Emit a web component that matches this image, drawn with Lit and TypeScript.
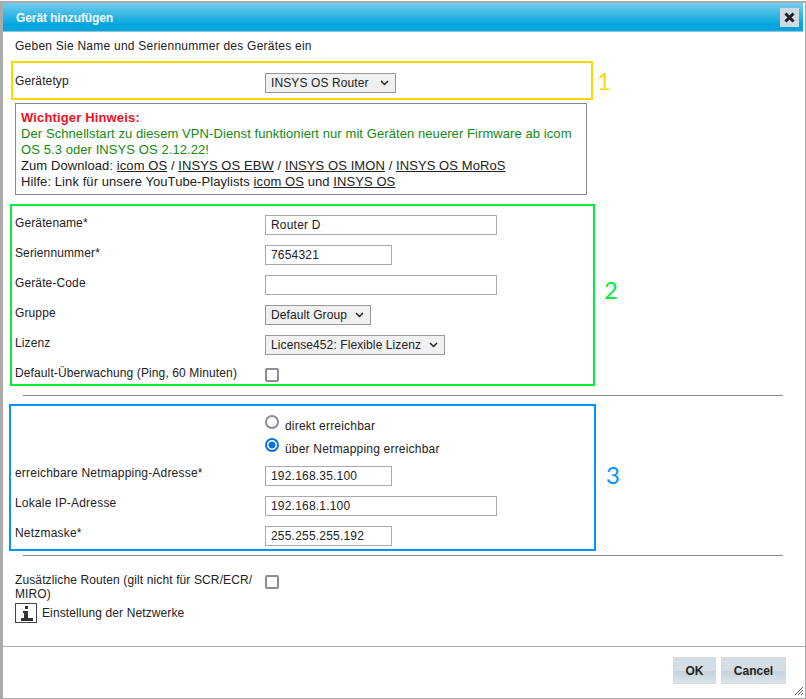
import { LitElement, html, css } from "lit";
import { customElement } from "lit/decorators.js";

const arrow = "url(\"data:image/svg+xml,%3Csvg xmlns='http://www.w3.org/2000/svg' width='9' height='6'%3E%3Cpath d='M1 1l3.5 3.5L8 1' fill='none' stroke='%23222' stroke-width='1.5'/%3E%3C/svg%3E\")";

@customElement("app-root")
export class AppRoot extends LitElement {
  static styles = css`
    :host { display: block; width: 806px; height: 699px; background: #fff; font-family: "Liberation Sans", Arial, sans-serif; font-size: 12px; color: #222; overflow: hidden; }
    * { box-sizing: border-box; }
    .dialog { height: 698px; margin-top: 1px; border: 2px solid #aaa; border-width: 2px 1px 1px 3px; padding-right: 2px; display: flex; flex-direction: column; position: relative; background: #fff; }
    .head { height: 29px; flex: none; display: flex; align-items: center; justify-content: space-between; padding: 0 4px 0 13px; background: linear-gradient(#72cdee, #00a5dc 80%); border-bottom: 1px solid #8fc4dc; color: #f4fbfe; font-weight: bold; font-size: 12px; letter-spacing: -0.1px; }
    .head span { margin-top: 2px; }
    .close { width: 19px; height: 19px; background: #d0d9e0; display: flex; align-items: center; justify-content: center; margin-top: 1px; }
    .body { flex: 1; display: flex; flex-direction: column; }
    .intro { margin: 7px 0 0 12px; height: 15px; line-height: 15px; letter-spacing: 0.24px; }
    .sec { display: flex; align-items: center; }
    .frame { border: 2px solid; flex: none; }
    .y { border-color: #ffd800; margin: 7px 0 0 8px; width: 582px; height: 39px; padding: 10px 0 0 2px; }
    .g { border-color: #00ee3a; margin: 9px 0 0 7px; width: 585px; height: 182px; padding: 9px 0 0 3px; }
    .b { border-color: #0096ff; margin: 18px 0 0 6px; width: 587px; height: 147px; padding: 8px 0 0 4px; }
    .num { font-family: Lato, sans-serif; font-size: 24px; line-height: 24px; }
    .num.ny { color: #ffd800; margin: 7px 0 0 4px; }
    .num.ng { color: #00ee3a; margin: -2px 0 0 9px; }
    .num.nb { color: #0096ff; margin: 12px 0 0 10px; }
    .row { display: grid; grid-template-columns: 250px 1fr; align-items: start; height: 30px; }
    .g .row:last-child { height: 20px; }
    .y .row { height: 20px; }
    .lab { line-height: 14px; letter-spacing: 0.12px; }
    .y .lab, .g .lab { margin-top: 1px; }
    .b .lab { letter-spacing: 0.2px; }
    input.t { display: block; height: 20px; border: 1px solid #aaa; background: #fff; padding: 0 5px; font: inherit; color: #222; letter-spacing: 0.2px; outline: none; }
    .w { width: 232px; }
    .s { width: 127px; }
    select { display: block; height: 20px; border: 1px solid #999; border-radius: 0; appearance: none; -webkit-appearance: none; background-color: #f0f0f0; background-image: var(--arrow); background-repeat: no-repeat; background-position: right 6px center; font: inherit; color: #222; padding: 0 0 0 5px; letter-spacing: 0.1px; }
    .sel1 { width: 131px; }
    .sel2 { width: 106px; }
    .sel3 { width: 180px; }
    .check { display: block; appearance: none; -webkit-appearance: none; width: 14px; height: 14px; margin: 3px 0 0; border: 2px solid #8c8c98; border-radius: 2px; background: #fff; }
    .opt { display: flex; align-items: center; height: 23px; letter-spacing: 0.2px; }
    .opt input { appearance: none; -webkit-appearance: none; width: 14px; height: 14px; margin: -7px 6px 0 0; flex: none; border: 2px solid #8c8c98; border-radius: 50%; background: #fff; }
    .opt input:checked { border-color: #0a6fe0; background: radial-gradient(circle, #0a6fe0 0 3.2px, #fff 3.8px); }
    .b .row { height: 30px; }
    .b .radios.row { height: 52px; }
    .sep { height: 1px; background: #888; margin-left: 20px; width: 760px; flex: none; }
    .note { margin: 3px 0 0 12px; width: 572px; height: 92px; border: 1px solid #888; padding: 6px 5px 0; font-size: 13px; line-height: 16px; letter-spacing: 0.08px; }
    .note b { display: block; color: #f0101f; letter-spacing: 0.15px; }
    .note .ok { color: #138a13; }
    .note u { text-decoration: underline; }
    .routes { display: grid; grid-template-columns: 250px 1fr; margin: 17px 0 0 12px; }
    .routes .lab { line-height: 14px; white-space: nowrap; }
    .routes .check { margin-top: 2px; }
    .info { display: flex; align-items: center; gap: 5px; margin: 2px 0 0 12px; letter-spacing: 0.12px; height: 20px; }
    .info svg { display: block; flex: none; }
    .foot { flex: none; height: 52px; border-top: 1px solid #aaa; display: flex; justify-content: flex-end; align-items: flex-start; gap: 5px; padding: 10px 19px 0 0; margin-right: -2px; }
    .btn { height: 27px; border: 1px solid #d4dce2; background: linear-gradient(#d6dee5 0, #d6dee5 50%, #c3d2dc 52%, #dbe4ea 100%); font: bold 12px "Liberation Sans", Arial, sans-serif; color: #222; padding: 0; }
    .ok-b { width: 43px; }
    .cancel { width: 65px; }
    .grip { position: absolute; right: 1px; bottom: 2px; display: block; }
  `;

  render() {
    return html`<div class="dialog" style="--arrow:${arrow}">
      <div class="head"><span>Gerät hinzufügen</span>
        <div class="close"><svg width="11" height="11" viewBox="0 0 11 11"><path d="M1.5 1.5 L9.5 9.5 M9.5 1.5 L1.5 9.5" stroke="#1d2126" stroke-width="3"/></svg></div>
      </div>
      <div class="body">
        <div class="intro">Geben Sie Name und Seriennummer des Gerätes ein</div>
        <div class="sec">
          <div class="frame y"><div class="row"><div class="lab">Gerätetyp</div><select class="sel1"><option>INSYS OS Router</option></select></div></div>
          <div class="num ny">1</div>
        </div>
        <div class="note">
          <b>Wichtiger Hinweis:</b>
          <span class="ok">Der Schnellstart zu diesem VPN-Dienst funktioniert nur mit Geräten neuerer Firmware ab icom<br>OS 5.3 oder INSYS OS 2.12.22!</span><br>
          Zum Download: <u>icom OS</u> / <u>INSYS OS EBW</u> / <u>INSYS OS IMON</u> / <u>INSYS OS MoRoS</u><br>
          Hilfe: Link für unsere YouTube-Playlists <u>icom OS</u> und <u>INSYS OS</u>
        </div>
        <div class="sec">
          <div class="frame g">
            <div class="row"><div class="lab">Gerätename*</div><input class="t w" .value=${"Router D"}></div>
            <div class="row"><div class="lab">Seriennummer*</div><input class="t s" .value=${"7654321"}></div>
            <div class="row"><div class="lab">Geräte-Code</div><input class="t w"></div>
            <div class="row"><div class="lab">Gruppe</div><select class="sel2"><option>Default Group</option></select></div>
            <div class="row"><div class="lab">Lizenz</div><select class="sel3"><option>License452: Flexible Lizenz</option></select></div>
            <div class="row"><div class="lab">Default-Überwachung (Ping, 60 Minuten)</div><input class="check" type="checkbox"></div>
          </div>
          <div class="num ng">2</div>
        </div>
        <div class="sep" style="margin-top:9px"></div>
        <div class="sec" style="margin-top:-10px">
          <div class="frame b">
            <div class="row radios"><div></div><div>
              <label class="opt"><input type="radio" name="r">direkt erreichbar</label>
              <label class="opt"><input type="radio" name="r" checked>über Netmapping erreichbar</label>
            </div></div>
            <div class="row"><div class="lab">erreichbare Netmapping-Adresse*</div><input class="t s" .value=${"192.168.35.100"}></div>
            <div class="row"><div class="lab">Lokale IP-Adresse</div><input class="t w" .value=${"192.168.1.100"}></div>
            <div class="row"><div class="lab">Netzmaske*</div><input class="t s" .value=${"255.255.255.192"}></div>
          </div>
          <div class="num nb">3</div>
        </div>
        <div class="sep" style="margin-top:4px"></div>
        <div class="routes"><div class="lab">Zusätzliche Routen (gilt nicht für SCR/ECR/<br>MIRO)</div><input class="check" type="checkbox"></div>
        <div class="info">
          <svg width="22" height="20" viewBox="0 0 22 20"><rect x=".5" y=".5" width="21" height="19" fill="#fff" stroke="#444"/><rect x="10" y="3" width="3" height="3" fill="#333"/><path d="M8 8h5v7h5v3H6v-3h3v-5H8z" fill="#333"/></svg>
          <span>Einstellung der Netzwerke</span>
        </div>
      </div>
      <div class="foot">
        <button class="btn ok-b">OK</button>
        <button class="btn cancel">Cancel</button>
      </div>
      <svg class="grip" width="10" height="10" viewBox="0 0 10 10"><path d="M1 9 L9 1 M4 9 L9 4 M7 9 L9 7" stroke="#555" stroke-width="1"/></svg>
    </div>`;
  }
}
